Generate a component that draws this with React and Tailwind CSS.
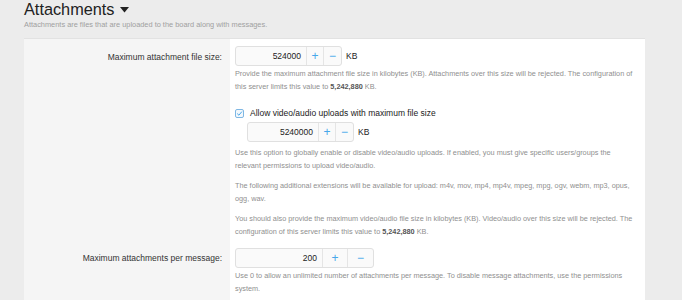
import React from "react";

const font = { fontFamily: '"Liberation Sans", Arial, sans-serif' };

function Spinner({ value, boxW, plusW, minusW }) {
  return (
    <div className="flex items-center">
      <div className="flex h-[20px] rounded-[3px] border border-[#e0e0e0] bg-[#fafafa]">
        <div className={`flex items-center justify-end pr-[5px] text-[8.5px] text-[#222] ${boxW}`}>{value}</div>
        <div className={`flex items-center justify-center border-l border-[#e5e5e5] text-[12px] text-[#47a7eb] ${plusW}`}>+</div>
        <div className={`flex items-center justify-center border-l border-[#e5e5e5] text-[12px] text-[#47a7eb] ${minusW}`}>−</div>
      </div>
    </div>
  );
}

export default function App() {
  return (
    <div className="h-[300px] w-[682px] overflow-hidden bg-[#ececec]" style={font}>
      <div className="pl-[24px]">
        <div className="flex items-center pt-[1px] text-[16.3px] leading-[16px] text-[#222]">
          Attachments
          <svg width="9" height="6" viewBox="0 0 9 6" className="ml-[5px] mt-[2px]">
            <path d="M0 0 H9 L4.5 5.5 Z" fill="#222" />
          </svg>
        </div>
        <div className="mt-[3px] text-[7.4px] leading-[10px] text-[#a0a0a0]">
          Attachments are files that are uploaded to the board along with messages.
        </div>
      </div>
      <div className="ml-[24px] mt-[8px] w-[621px] border-t border-[#e2e2e2] bg-white">
        {/* Row 1 */}
        <div className="flex">
          <div className="w-[206px] shrink-0 bg-[#f5f5f5] pr-[8px] pt-[12px] text-right text-[8.5px] leading-[12px] text-[#333]">
            Maximum attachment file size:
          </div>
          <div className="flex-1 pl-[5px] pr-[10px] pt-[7px]">
            <div className="flex items-center gap-[4px]">
              <Spinner value="524000" boxW="w-[70px]" plusW="w-[17px]" minusW="w-[18px]" />
              <span className="text-[8.5px] text-[#222]">KB</span>
            </div>
            <div className="mt-[1px] text-[7.3px] leading-[13px] text-[#8f8f8f]">
              Provide the maximum attachment file size in kilobytes (KB). Attachments over this size will be rejected. The configuration of this server limits this value to <span className="font-bold text-[#555]">5,242,880</span> KB.
            </div>
            <div className="mt-[14px] flex items-center gap-[6px]">
              <div className="flex h-[9px] w-[9px] items-center justify-center rounded-[2px] border border-[#7fb7e3] bg-[#f3f8fc]">
                <svg width="7" height="7" viewBox="0 0 7 7">
                  <path d="M1.2 3.6 L2.9 5.2 L5.9 1.6" stroke="#47a7eb" strokeWidth="1" fill="none" />
                </svg>
              </div>
              <span className="text-[8.5px] leading-[12px] text-[#222]">Allow video/audio uploads with maximum file size</span>
            </div>
            <div className="ml-[12px] mt-[3px] flex items-center gap-[4px]">
              <Spinner value="5240000" boxW="w-[70px]" plusW="w-[17px]" minusW="w-[18px]" />
              <span className="text-[8.5px] text-[#222]">KB</span>
            </div>
            <div className="mt-[4px] text-[7.3px] leading-[13px] text-[#8f8f8f]">
              <p>Use this option to globally enable or disable video/audio uploads. If enabled, you must give specific users/groups the relevant permissions to upload video/audio.</p>
              <p className="mt-[7px]">The following additional extensions will be available for upload: m4v, mov, mp4, mp4v, mpeg, mpg, ogv, webm, mp3, opus, ogg, wav.</p>
              <p className="mt-[7px]">You should also provide the maximum video/audio file size in kilobytes (KB). Video/audio over this size will be rejected. The configuration of this server limits this value to <span className="font-bold text-[#555]">5,242,880</span> KB.</p>
            </div>
          </div>
        </div>
        {/* Row 2 */}
        <div className="flex">
          <div className="w-[206px] shrink-0 bg-[#f5f5f5] pr-[8px] pt-[14px] text-right text-[8.5px] leading-[12px] text-[#333]">
            Maximum attachments per message:
          </div>
          <div className="flex-1 pl-[5px] pr-[10px] pt-[10px] pb-[20px]">
            <Spinner value="200" boxW="w-[86px]" plusW="w-[25px]" minusW="w-[26px]" />
            <div className="mt-[1px] text-[7.3px] leading-[13px] text-[#8f8f8f]">
              Use 0 to allow an unlimited number of attachments per message. To disable message attachments, use the permissions system.
            </div>
          </div>
        </div>
      </div>
    </div>
  );
}
